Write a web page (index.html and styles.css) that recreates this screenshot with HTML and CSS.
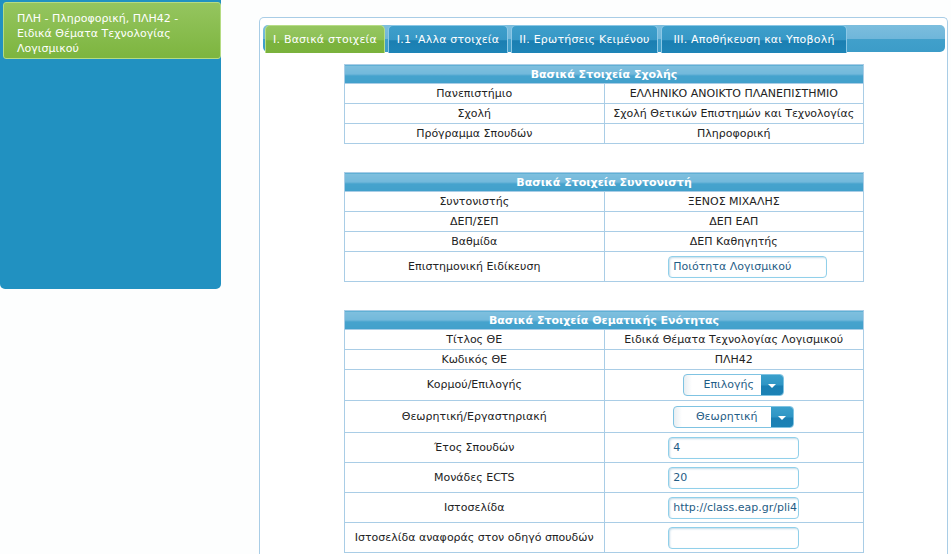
FILE: index.html
```html
<!DOCTYPE html>
<html lang="el">
<head>
<meta charset="utf-8">
<title>ΠΛΗ42</title>
<link rel="stylesheet" href="styles.css">
</head>
<body>
<div class="page">
  <aside class="sidebar">
    <div class="side-item">ΠΛΗ - Πληροφορική, ΠΛΗ42 - Ειδικά Θέματα Τεχνολογίας Λογισμικού</div>
  </aside>
  <main class="panel">
    <nav class="tabbar">
      <div class="tab active">I. Βασικά στοιχεία</div>
      <div class="tab">I.1 'Αλλα στοιχεία</div>
      <div class="tab">II. Ερωτήσεις Κειμένου</div>
      <div class="tab">III. Αποθήκευση και Υποβολή</div>
    </nav>
    <div class="content">
      <table class="info">
        <tr><th colspan="2">Βασικά Στοιχεία Σχολής</th></tr>
        <tr><td>Πανεπιστήμιο</td><td>ΕΛΛΗΝΙΚΟ ΑΝΟΙΚΤΟ ΠΛΑΝΕΠΙΣΤΗΜΙΟ</td></tr>
        <tr><td>Σχολή</td><td>Σχολή Θετικών Επιστημών και Τεχνολογίας</td></tr>
        <tr><td>Πρόγραμμα Σπουδών</td><td>Πληροφορική</td></tr>
      </table>
      <table class="info">
        <tr><th colspan="2">Βασικά Στοιχεία Συντονιστή</th></tr>
        <tr><td>Συντονιστής</td><td>ΞΕΝΟΣ ΜΙΧΑΛΗΣ</td></tr>
        <tr><td>ΔΕΠ/ΣΕΠ</td><td>ΔΕΠ ΕΑΠ</td></tr>
        <tr><td>Βαθμίδα</td><td>ΔΕΠ Καθηγητής</td></tr>
        <tr class="tall"><td>Επιστημονική Ειδίκευση</td><td><span class="field wide">Ποιότητα Λογισμικού</span></td></tr>
      </table>
      <table class="info">
        <tr><th colspan="2">Βασικά Στοιχεία Θεματικής Ενότητας</th></tr>
        <tr><td>Τίτλος ΘΕ</td><td>Ειδικά Θέματα Τεχνολογίας Λογισμικού</td></tr>
        <tr><td>Κωδικός ΘΕ</td><td>ΠΛΗ42</td></tr>
        <tr class="sel"><td>Κορμού/Επιλογής</td><td><span class="select s1"><span class="sel-text">Επιλογής</span><span class="sel-btn"></span></span></td></tr>
        <tr class="sel sel2"><td>Θεωρητική/Εργαστηριακή</td><td><span class="select s2"><span class="sel-text">Θεωρητική</span><span class="sel-btn"></span></span></td></tr>
        <tr class="tall"><td>Έτος Σπουδών</td><td><span class="field">4</span></td></tr>
        <tr class="tall"><td>Μονάδες ECTS</td><td><span class="field">20</span></td></tr>
        <tr class="tall"><td>Ιστοσελίδα</td><td><span class="field">http://class.eap.gr/pli4</span></td></tr>
        <tr class="tall"><td>Ιστοσελίδα αναφοράς στον οδηγό σπουδών</td><td><span class="field"></span></td></tr>
      </table>
    </div>
  </main>
</div>
</body>
</html>
```

FILE: styles.css
```css
* { box-sizing: border-box; }
html, body { margin: 0; padding: 0; background: #fdfefe; }
body {
  font-family: "DejaVu Sans", Verdana, sans-serif;
  font-size: 11px;
  color: #222;
  width: 951px;
  height: 554px;
  overflow: hidden;
}
.page {
  display: flex;
  align-items: flex-start;
}
.sidebar {
  width: 221px;
  height: 289px;
  background: #2191c1;
  border-radius: 0 0 5px 5px;
  padding: 2px 0 0 3px;
  flex-shrink: 0;
}
.side-item {
  height: 57px;
  background: linear-gradient(#95c55f, #7db53f);
  border: 1px solid #b5dc83;
  border-radius: 3px;
  color: #fff;
  font-size: 11px;
  line-height: 15px;
  padding: 8px 30px 0 13px;
}
.panel {
  margin: 17px 0 0 38px;
  width: 689px;
  height: 560px;
  border: 1px solid #a9cde6;
  border-bottom: none;
  border-radius: 5px 5px 0 0;
  background: #fff;
  padding: 7px 2px 0 3px;
}
.tabbar {
  display: flex;
  gap: 3px;
  height: 27px;
  padding-left: 2px;
  border-radius: 5px;
  background: linear-gradient(#7cbede 0%, #6fb6da 50%, #41a0cb 52%, #3c9cc8 100%);
}
.tab {
  height: 28px;
  padding: 0;
  white-space: nowrap;
  display: flex;
  align-items: center;
  justify-content: center;
  color: #fff;
  font-size: 11px;
  letter-spacing: 0.2px;
  border: 1px solid #8cc8e6;
  border-bottom: none;
  border-radius: 5px 5px 0 0;
  background: linear-gradient(#3e9fcb 0%, #3798c6 50%, #1b7fb2 55%, #1e85b7 100%);
}
.tab:nth-child(1) { width: 120px; }
.tab:nth-child(2) { width: 120px; }
.tab:nth-child(3) { width: 147px; }
.tab:nth-child(4) { width: 186px; }
.tab.active {
  background: linear-gradient(#96c660 0%, #8cc055 50%, #7bb33d 55%, #7ab23c 100%);
  border-color: #b7dd86;
}
.content {
  display: flex;
  flex-direction: column;
  align-items: center;
  gap: 28px;
  padding-top: 12px;
}
.info {
  width: 520px;
  border-collapse: collapse;
  table-layout: fixed;
}
.info th {
  height: 19px;
  padding: 0;
  color: #fff;
  font-weight: bold;
  font-size: 11px;
  border: 1px solid #a9cde6;
  background: linear-gradient(#7fc0de 0%, #72b8db 50%, #46a3cd 55%, #42a0cb 100%);
}
.info td {
  width: 50%;
  height: 20px;
  padding: 0;
  text-align: center;
  border: 1px solid #a9cde6;
  vertical-align: middle;
  line-height: 14px;
}
.info tr.tall td { height: 30px; }
.info tr.sel td { height: 31px; }
.info tr.sel2 td { height: 32px; }
.field {
  display: inline-block;
  vertical-align: middle;
  width: 131px;
  height: 22px;
  line-height: 20px;
  text-align: left;
  padding: 0 4px;
  color: #1f5d86;
  white-space: nowrap;
  overflow: hidden;
  border: 1px solid #91d0ea;
  border-radius: 4px;
  box-shadow: inset 1px 1px 2px rgba(80, 150, 190, 0.35);
  background: #fff;
  margin-left: 0;
}
.field.wide { width: 159px; margin-left: 28px; }
.select {
  display: inline-flex;
  vertical-align: middle;
  height: 22px;
  border: 1px solid #7fc3e2;
  border-radius: 4px;
  overflow: hidden;
  background: linear-gradient(90deg, #e8eef2 0, #fff 8px);
}
.select.s1 { width: 101px; margin-left: 0; }
.select.s2 { width: 121px; margin-left: 0; }
.sel-text {
  flex: 1;
  display: flex;
  align-items: center;
  justify-content: center;
  color: #1f5d86;
  padding-left: 12px;
}
.s2 .sel-text { padding-left: 8px; }
.sel-btn {
  width: 22px;
  position: relative;
  background: linear-gradient(#3aa0cc 0%, #2f95c4 50%, #1a7fb3 55%, #1b82b5 100%);
}
.sel-btn::after {
  content: "";
  position: absolute;
  left: 7px;
  top: 9px;
  border-left: 4px solid transparent;
  border-right: 4px solid transparent;
  border-top: 4px solid #fff;
}
```
